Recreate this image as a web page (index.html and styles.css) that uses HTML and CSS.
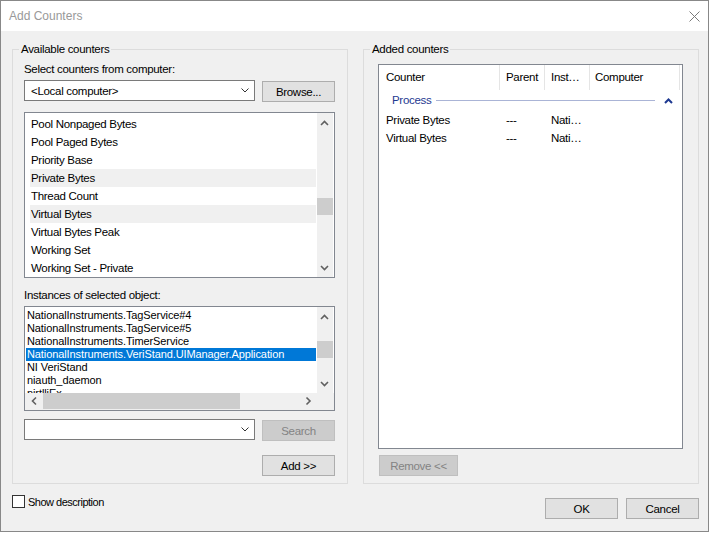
FILE: index.html
```html
<!DOCTYPE html>
<html>
<head>
<meta charset="utf-8">
<link rel="stylesheet" href="styles.css">
</head>
<body>
<div class="window">
  <div class="titlebar">
    <span class="title">Add Counters</span>
    <svg class="close" width="11" height="11" viewBox="0 0 11 11"><path d="M0.5 0.5L10.5 10.5M10.5 0.5L0.5 10.5" stroke="#7a7a7a" stroke-width="1" fill="none"/></svg>
  </div>
  <div class="body">
    <div class="groups">
      <fieldset class="group group-left">
        <legend>Available counters</legend>
        <div class="label">Select counters from computer:</div>
        <div class="row row-first">
          <div class="combo"><span>&lt;Local computer&gt;</span><svg width="8" height="5" viewBox="0 0 8 5"><path d="M0.5 0.5L4 4L7.5 0.5" fill="none" stroke="#333" stroke-width="1"/></svg></div>
          <button class="btn">Browse...</button>
        </div>
        <div class="list counters">
          <div class="items">
            <div class="item">Pool Nonpaged Bytes</div>
            <div class="item">Pool Paged Bytes</div>
            <div class="item">Priority Base</div>
            <div class="item hl">Private Bytes</div>
            <div class="item">Thread Count</div>
            <div class="item hl">Virtual Bytes</div>
            <div class="item">Virtual Bytes Peak</div>
            <div class="item">Working Set</div>
            <div class="item">Working Set - Private</div>
          </div>
          <div class="vscroll">
            <svg class="arrow" width="16" height="17" viewBox="0 0 16 17"><path d="M4 12L7.5 8.5L11 12" fill="none" stroke="#606060" stroke-width="1.6"/></svg>
            <div class="track"><div class="thumb thumb-counters"></div></div>
            <svg class="arrow" width="16" height="17" viewBox="0 0 16 17"><path d="M4 6L7.5 9.5L11 6" fill="none" stroke="#606060" stroke-width="1.6"/></svg>
          </div>
        </div>
        <div class="label label-inst">Instances of selected object:</div>
        <div class="list instances">
          <div class="inst-top">
            <div class="items inst-items">
              <div class="inst">NationalInstruments.TagService#4</div>
              <div class="inst">NationalInstruments.TagService#5</div>
              <div class="inst">NationalInstruments.TimerService</div>
              <div class="inst sel">NationalInstruments.VeriStand.UIManager.Application</div>
              <div class="inst">NI VeriStand</div>
              <div class="inst">niauth_daemon</div>
              <div class="inst">nirtlliEx</div>
            </div>
            <div class="vscroll">
              <svg class="arrow" width="16" height="17" viewBox="0 0 16 17"><path d="M4 12L7.5 8.5L11 12" fill="none" stroke="#606060" stroke-width="1.6"/></svg>
              <div class="track"><div class="thumb thumb-inst"></div></div>
              <svg class="arrow" width="16" height="17" viewBox="0 0 16 17"><path d="M4 6L7.5 9.5L11 6" fill="none" stroke="#606060" stroke-width="1.6"/></svg>
            </div>
          </div>
          <div class="hrow">
            <div class="hscroll">
              <svg class="harrow" width="17" height="17" viewBox="0 0 17 17"><path d="M11 4.5L7.5 8L11 11.5" fill="none" stroke="#606060" stroke-width="1.6"/></svg>
              <div class="htrack"><div class="hthumb"></div></div>
              <svg class="harrow" width="17" height="17" viewBox="0 0 17 17"><path d="M6.5 4.5L10 8L6.5 11.5" fill="none" stroke="#606060" stroke-width="1.6"/></svg>
            </div>
            <div class="corner"></div>
          </div>
        </div>
        <div class="row row-search">
          <div class="combo"><span></span><svg width="8" height="5" viewBox="0 0 8 5"><path d="M0.5 0.5L4 4L7.5 0.5" fill="none" stroke="#333" stroke-width="1"/></svg></div>
          <button class="btn disabled">Search</button>
        </div>
        <div class="row row-add">
          <button class="btn btn-add">Add &gt;&gt;</button>
        </div>
      </fieldset>
      <fieldset class="group group-right">
        <legend>Added counters</legend>
        <div class="listview">
          <div class="lv-head">
            <div class="c c1">Counter</div>
            <div class="c c2">Parent</div>
            <div class="c c3">Inst…</div>
            <div class="c c4">Computer</div>
          </div>
          <div class="lv-group">
            <span class="g-name">Process</span>
            <span class="g-line"></span>
            <svg class="g-chev" width="9" height="6" viewBox="0 0 9 6"><path d="M1 5L4.5 1.5L8 5" fill="none" stroke="#1e3991" stroke-width="2"/></svg>
          </div>
          <div class="lv-row">
            <div class="c c1">Private Bytes</div>
            <div class="c c2">---</div>
            <div class="c c3">Nati…</div>
          </div>
          <div class="lv-row">
            <div class="c c1">Virtual Bytes</div>
            <div class="c c2">---</div>
            <div class="c c3">Nati…</div>
          </div>
        </div>
        <button class="btn disabled btn-remove">Remove &lt;&lt;</button>
      </fieldset>
    </div>
    <div class="footer">
      <label class="check"><span class="box"></span><span class="check-label">Show description</span></label>
      <div class="footer-btns">
        <button class="btn">OK</button>
        <button class="btn">Cancel</button>
      </div>
    </div>
  </div>
</div>
</body>
</html>
```

FILE: styles.css
```css
* { box-sizing: border-box; }
html, body { margin: 0; padding: 0; background: #ffffff; overflow: hidden; }
body {
  font-family: "Liberation Sans", Arial, sans-serif;
  font-size: 11.5px;
  letter-spacing: -0.3px;
  color: #000;
}
.window {
  width: 709px;
  height: 532px;
  border: 1px solid #888888;
  background: #f0f0f0;
  display: flex;
  flex-direction: column;
}
.titlebar {
  height: 30px;
  flex: none;
  background: #ffffff;
  display: flex;
  align-items: center;
  justify-content: space-between;
  padding: 0 8px 0 8px;
}
.title { font-size: 12px; letter-spacing: 0; color: #999999; }
.close { display: block; }
.body {
  flex: 1;
  display: flex;
  flex-direction: column;
  padding: 10px 8px 0 11px;
}
.groups { display: flex; gap: 15px; }
.group {
  margin: 0;
  width: 336px;
  min-width: 0;
  border: 1px solid #dcdcdc;
}
.group legend {
  padding: 0 2px;
  margin-left: -5px;
  line-height: 16px;
}
.group-left { padding: 4px 12px 7px 11px; }
.group-right { padding: 7px 15px 6px 14px; }
.group-right legend { margin-left: -8px; }

.label { line-height: 16px; }
.label-inst { margin-top: 9px; }
.row { display: flex; gap: 7px; align-items: flex-start; }
.row-first { margin-top: 3px; }
.row-search { margin-top: 8px; }
.row-add { margin-top: 14px; justify-content: flex-end; }

.combo {
  width: 231px;
  height: 21px;
  border: 1px solid #7a7a7a;
  background: #ffffff;
  display: flex;
  align-items: center;
  justify-content: space-between;
  padding: 0 5px 0 6px;
}
.combo svg { display: block; }

.btn {
  width: 73px;
  height: 21px;
  margin: 1px 0 0 0;
  padding: 0;
  background: #e1e1e1;
  border: 1px solid #adadad;
  font: inherit;
  letter-spacing: inherit;
  color: #000;
}
.btn.disabled { background: #cccccc; border-color: #bfbfbf; color: #838383; }
.btn-add { margin-top: 0; }
.btn-remove { width: 79px; margin: 6px 0 0 1px; height: 21px; }

.list {
  border: 1px solid #828790;
  background: #ffffff;
}
.counters { margin-top: 10px; height: 166px; display: flex; }
.items { flex: 1; overflow: hidden; }
.counters .items { padding: 2px 1px 0 5px; }
.item { height: 18px; line-height: 18px; padding-left: 1px; white-space: nowrap; }
.item.hl { background: #f0f0f0; }

.vscroll {
  width: 16px;
  margin-right: 1px;
  background: #f0f0f0;
  display: flex;
  flex-direction: column;
  flex: none;
}
.arrow { display: block; flex: none; }
.track { flex: 1; }
.thumb { width: 16px; height: 17px; background: #cdcdcd; }
.thumb-counters { margin-top: 68px; }
.thumb-inst { margin-top: 17px; }

.instances { margin-top: 3px; height: 105px; display: flex; flex-direction: column; }
.inst-top { display: flex; height: 86px; flex: none; }
.inst-items { padding: 2px 1px 0 1px; font-size: 11px; letter-spacing: -0.1px; }
.inst { height: 13px; line-height: 13px; padding-left: 1px; white-space: nowrap; }
.inst.sel { background: #0078d7; color: #ffffff; }
.hrow { display: flex; height: 17px; flex: none; }
.hscroll { flex: 1; display: flex; background: #f0f0f0; }
.harrow { display: block; flex: none; }
.htrack { flex: 1; }
.hthumb { width: 197px; height: 16px; margin-left: 1px; background: #cdcdcd; }
.corner { width: 17px; background: #f0f0f0; }

.listview {
  height: 385px;
  border: 1px solid #828790;
  background: #ffffff;
}
.lv-head { display: flex; height: 25px; }
.lv-head .c { line-height: 25px; border-right: 1px solid #e5e5e5; }
.c { white-space: nowrap; overflow: hidden; }
.c1 { width: 121px; padding-left: 7px; }
.c2 { width: 45px; padding-left: 6px; }
.c3 { width: 45px; padding-left: 6px; }
.c4 { width: 90px; padding-left: 5px; }
.lv-group {
  height: 21px;
  display: flex;
  align-items: center;
  padding: 0 9px 0 13px;
}
.g-name { color: #1e3991; line-height: 21px; }
.g-line { flex: 1; height: 1px; background: #aab4d6; margin: 0 9px 0 5px; }
.g-chev { display: block; }
.lv-row { display: flex; height: 18px; line-height: 18px; }

.footer {
  display: flex;
  justify-content: space-between;
  align-items: flex-start;
  padding-right: 1px;
}
.check { display: flex; align-items: center; gap: 3px; margin-top: 11px; }
.box { width: 13px; height: 13px; border: 1px solid #333333; background: #ffffff; }
.check-label { font-size: 11px; letter-spacing: -0.5px; }
.footer-btns { display: flex; gap: 8px; margin-top: 13px; }
```
